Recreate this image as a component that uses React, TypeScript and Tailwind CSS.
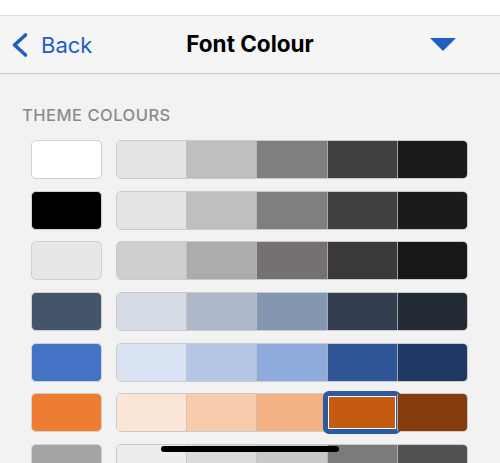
import React from "react";

const rows: { base: string; shades: string[] }[] = [
  { base: "#ffffff", shades: ["#e4e4e4", "#bfbfbf", "#7f7f7f", "#404040", "#1b1b1b"] },
  { base: "#000000", shades: ["#e4e4e4", "#bfbfbf", "#7f7f7f", "#404040", "#1b1b1b"] },
  { base: "#e8e7e7", shades: ["#d0cece", "#aeabab", "#767171", "#3b3838", "#181717"] },
  { base: "#44546a", shades: ["#d6dce5", "#adb9ca", "#8497b0", "#333f50", "#222a35"] },
  { base: "#4472c4", shades: ["#dae3f3", "#b4c7e7", "#8faadc", "#2f5597", "#203864"] },
  { base: "#ed7d31", shades: ["#fbe5d6", "#f8cbad", "#f4b183", "#c55a11", "#843c0c"] },
  { base: "#a5a5a5", shades: ["#ededed", "#dbdbdb", "#c9c9c9", "#7b7b7b", "#525252"] },
];

export default function App() {
  return (
    <div
      className="w-[500px] h-[463px] overflow-hidden bg-[#f2f2f2] flex flex-col relative"
      style={{ fontFamily: "Inter, 'Noto Sans', sans-serif" }}
    >
      {/* content scrolled under header */}
      <div className="h-[16px] shrink-0 bg-white overflow-hidden border-b border-[#dcdcdc]">
        <div className="flex pt-[13px] text-[22px] leading-[22px] font-bold text-black whitespace-nowrap">
          <span className="ml-[35px]">Mo</span>
          <span className="ml-[132px]">al</span>
          <span className="ml-[60px]">ate</span>
          <span className="ml-[50px]">ll</span>
        </div>
      </div>

      {/* header */}
      <div className="h-[58px] shrink-0 bg-[#f5f5f5] border-b border-[#c8c8c8] flex items-center relative">
        <div className="flex items-center ml-[10px] text-[#1f5fc4]">
          <svg width="20" height="26" viewBox="0 0 20 26">
            <polyline
              points="15.5,3 4.5,13 15.5,23"
              fill="none"
              stroke="#1f5fc4"
              strokeWidth="3.6"
              strokeLinecap="round"
              strokeLinejoin="round"
            />
          </svg>
          <span className="ml-[11px] text-[22px] leading-none">Back</span>
        </div>
        <div className="absolute left-0 right-0 text-center text-[22.5px] font-bold text-black pointer-events-none leading-none">
          Font Colour
        </div>
        <div className="ml-auto mr-[44px]">
          <svg width="26" height="13" viewBox="0 0 26 13">
            <polygon points="0,0 26,0 13,13" fill="#1f5fc4" />
          </svg>
        </div>
      </div>

      {/* body */}
      <div className="pt-[31px] flex flex-col">
        <div className="ml-[22px] text-[16.5px] leading-[20px] font-medium tracking-[0.5px] text-[#8a8a8e]">
          THEME COLOURS
        </div>
        <div className="mt-[15px] flex flex-col gap-[11.7px]">
          {rows.map((r, i) => (
            <div key={i} className="flex h-[39px] shrink-0">
              <div
                className="ml-[31px] w-[71px] h-full rounded-[5px] border border-[#d0d0d0]"
                style={{ backgroundColor: r.base }}
              />
              <div className="ml-[14px] w-[352px] h-full rounded-[5px] border border-[#cacaca] flex">
                {r.shades.map((c, j) => (
                  <div
                    key={j}
                    className={
                      "flex-1 h-full relative " +
                      (j > 0 ? "border-l border-[rgba(195,195,195,0.8)] " : "") +
                      (j === 0 ? "rounded-l-[4px] " : "") +
                      (j === 4 ? "rounded-r-[4px] " : "")
                    }
                    style={{ backgroundColor: c }}
                  >
                    {i === 5 && j === 3 && (
                      <div className="absolute -left-[5px] -right-[4px] -top-[3px] -bottom-[3px] rounded-[6px] border-[5px] border-[#2c5aa0]">
                        <div className="absolute inset-0 border border-white" />
                      </div>
                    )}
                  </div>
                ))}
              </div>
            </div>
          ))}
        </div>
      </div>

      {/* home indicator */}
      <div className="absolute left-[161px] top-[446px] w-[178px] h-[6px] rounded-full bg-black" />
    </div>
  );
}
